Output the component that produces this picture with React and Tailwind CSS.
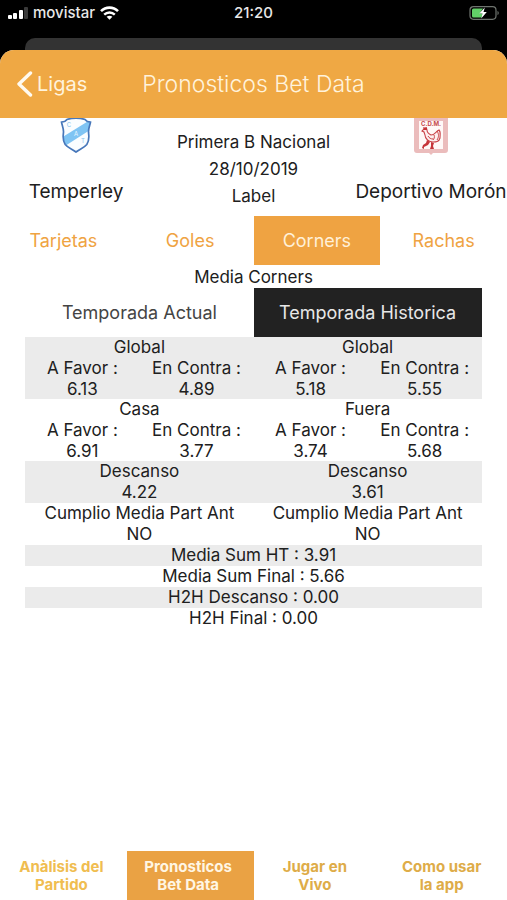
import React from "react";

const teamStats = [
  {
    shaded: true,
    titles: ["Global", "Global"],
    values: ["6.13", "4.89", "5.18", "5.55"],
  },
  {
    shaded: false,
    titles: ["Casa", "Fuera"],
    values: ["6.91", "3.77", "3.74", "5.68"],
  },
];

const pairStats = [
  { shaded: true, title: "Descanso", values: ["4.22", "3.61"] },
  { shaded: false, title: "Cumplio Media Part Ant", values: ["NO", "NO"] },
];

const totals = [
  "Media Sum HT : 3.91",
  "Media Sum Final : 5.66",
  "H2H Descanso : 0.00",
  "H2H Final : 0.00",
];

const tabs = ["Tarjetas", "Goles", "Corners", "Rachas"];

const sections = [
  { lines: ["Anàlisis del", "Partido"], tone: "text-[#f0bd50]" },
  { lines: ["Pronosticos", "Bet Data"], tone: "bg-[#eaa244] text-[#fff6e4]", active: true },
  { lines: ["Jugar en", "Vivo"], tone: "text-[#deac48]" },
  { lines: ["Como usar", "la app"], tone: "text-[#deac48]" },
];

function StatusBar() {
  return (
    <div className="grid h-[38px] grid-cols-3 items-start px-2 pt-1 text-[15px] leading-[18px] font-medium text-[#e8e8e8]">
      <div className="flex items-center gap-[5px]">
        <svg width="20" height="12" viewBox="0 0 20 12" aria-hidden="true">
          <rect x="0" y="8" width="4" height="4" rx="1" fill="#fff" />
          <rect x="5" y="6" width="4" height="6" rx="1" fill="#fff" />
          <rect x="11" y="3" width="4" height="9" rx="1" fill="#fff" />
          <rect x="16" y="0" width="4" height="12" rx="1" fill="#3a3a3a" />
        </svg>
        <span>movistar</span>
        <svg width="19" height="14" viewBox="0 0 19 14" aria-hidden="true">
          <path d="M1 5.2C5.8.4 13.200.4 18 5.200" fill="none" stroke="#fff" strokeWidth="2.600" />
          <path d="M4.200 8.600c3-2.900 7.600-2.900 10.600 0" fill="none" stroke="#fff" strokeWidth="2.400" />
          <path d="M9.500 13.800 6.600 10.800c1.700-1.500 4.100-1.500 5.800 0z" fill="#fff" />
        </svg>
      </div>
      <div className="text-center">21:20</div>
      <div className="flex justify-end pt-[2px]">
        <svg width="30" height="14" viewBox="0 0 30 14" aria-hidden="true">
          <rect x="1" y="0.700" width="26" height="12.600" rx="3.500" fill="none" stroke="#6f746f" strokeWidth="1.200" />
          <path d="M4.500 2.500h9.500l-3.500 5h3l-1 4h-8a1.500 1.500 0 0 1-1.500-1.500v-6a1.500 1.500 0 0 1 1.500-1.500z" fill="#62cf68" />
          <path d="M15.800 1.500 10.200 7.600h3.300l-1.300 5 5.600-6.500h-3.300z" fill="#fff" />
          <path d="M28.500 5c1.600.6 1.600 3.400 0 4z" fill="#6f746f" />
        </svg>
      </div>
    </div>
  );
}

function TemperleyCrest() {
  return (
    <svg width="32" height="36" viewBox="0 0 32 36" role="img" aria-label="Temperley">
      <clipPath id="crest">
        <path d="M7 1.500c5-1.600 13-1.600 18 0 1.400 2 3.500 2.600 5.500 2.700-.5 3-2.200 6.300-2 10 .4 4.300 1.300 8-1.700 12.300C24 30 19.500 31 16 34 12.500 31 8 30 5.200 26.500c-3-4.300-2.100-8-1.700-12.300.2-3.700-1.500-7-2-10 2-.1 4.100-.7 5.500-2.700z" />
      </clipPath>
      <g clipPath="url(#crest)">
        <rect width="32" height="36" fill="#fafdff" />
        <path d="M1 20 30 2v10L5 28z" fill="#7fc4f3" />
      </g>
      <path d="M7 1.500c5-1.600 13-1.600 18 0 1.400 2 3.500 2.600 5.500 2.700-.5 3-2.200 6.300-2 10 .4 4.300 1.300 8-1.700 12.300C24 30 19.500 31 16 34 12.500 31 8 30 5.200 26.500c-3-4.300-2.100-8-1.700-12.300.2-3.700-1.500-7-2-10 2-.1 4.100-.7 5.500-2.700z" fill="none" stroke="#4777ba" strokeWidth="1.700" />
      <g fontFamily="Inter, sans-serif" fontSize="6" textAnchor="middle">
        <text x="9" y="9" fill="#86c4ee">C</text>
        <text x="16" y="18" fill="#e8f6ff">A</text>
        <text x="23" y="25" fill="#86c4ee">T</text>
      </g>
    </svg>
  );
}

function MoronCrest() {
  return (
    <svg width="34" height="37" viewBox="0 0 34 37" role="img" aria-label="Deportivo Morón">
      <path d="M0 0h34v32q0 3-3 3H19l-2 2-2-2H3q-3 0-3-3z" fill="#ebbcbc" />
      <path d="M5 3h24v28H5z" fill="#fff8f7" />
      <text x="17" y="8" textAnchor="middle" fontFamily="Inter, sans-serif" fontSize="6" fontWeight="700" fill="#c4474a">C.D.M.</text>
      <path d="M10 11c1-2 3-1 3 1 0 3 2 4 4 5 4 0 5-4 8-5 2 2 1 5 1 8-1 4-4 4-7 4-4 0-8-3-8-7l-1-3-2-1z" fill="#fdeeee" stroke="#c94348" strokeWidth="1.100" />
      <path d="M23 13c2 3 2 6 0 9M20 17c1 2 0 4-1 5M14 18c1 2 3 3 5 3" fill="none" stroke="#c94348" strokeWidth="1" />
      <path d="M9 9l2 1 2-1v3h-3zM13 22l3 2-2 3-4 2v2l-2-1 1-3 3-2zM17 24l3 1-1 3 1 3h-4l1-3z" fill="#c63439" />
    </svg>
  );
}

function StatsTable() {
  return (
    <table className="w-full table-fixed text-center text-[17px] leading-[21px]">
      {teamStats.map((group, i) => (
        <tbody key={i} className={group.shaded ? "bg-[#ebebeb]" : "bg-white"}>
          <tr>
            {group.titles.map((title, j) => (
              <th key={j} colSpan={2} className="p-0 font-normal">{title}</th>
            ))}
          </tr>
          <tr>
            {["A Favor :", "En Contra :", "A Favor :", "En Contra :"].map((label, j) => (
              <th key={j} className="p-0 font-normal">{label}</th>
            ))}
          </tr>
          <tr className="leading-5">
            {group.values.map((value, j) => (
              <td key={j} className="p-0">{value}</td>
            ))}
          </tr>
        </tbody>
      ))}
      {pairStats.map((group) => (
        <tbody key={group.title} className={group.shaded ? "bg-[#ebebeb]" : "bg-white"}>
          <tr>
            <th colSpan={2} className="p-0 font-normal">{group.title}</th>
            <th colSpan={2} className="p-0 font-normal">{group.title}</th>
          </tr>
          <tr>
            <td colSpan={2} className="p-0">{group.values[0]}</td>
            <td colSpan={2} className="p-0">{group.values[1]}</td>
          </tr>
        </tbody>
      ))}
      <tbody>
        {totals.map((total) => (
          <tr key={total} className="odd:bg-[#ebebeb]">
            <td colSpan={4} className="p-0">{total}</td>
          </tr>
        ))}
      </tbody>
    </table>
  );
}

export default function App() {
  return (
    <div className="flex min-h-screen flex-col bg-black font-['Inter','Liberation_Sans',sans-serif] text-[#202020]">
      <StatusBar />
      <div className="mx-[5%] h-3 rounded-t-[10px] bg-[#333333]" />
      <div className="flex flex-1 flex-col overflow-hidden rounded-t-[14px] bg-white">
        <header className="grid h-[68px] grid-cols-[1fr_auto_1fr] items-center bg-[#efa844] px-4 text-[#fff3dc]">
          <button className="flex items-center gap-1 text-xl">
            <svg width="17" height="26" viewBox="0 0 17 26" aria-hidden="true">
              <path d="M14.500 2 3 13l11.500 11" fill="none" stroke="#fffaf0" strokeWidth="3.400" strokeLinecap="round" strokeLinejoin="round" />
            </svg>
            Ligas
          </button>
          <h1 className="text-[23px] font-light">Pronosticos Bet Data</h1>
        </header>

        <section className="grid h-[98px] grid-cols-[30%_1fr_30%] text-center">
          <div className="flex flex-col items-center justify-between pb-3">
            <TemperleyCrest />
            <h2 className="text-[19px] leading-6 whitespace-nowrap">Temperley</h2>
          </div>
          <div className="flex flex-col pt-[11px] text-[17px] leading-[27px]">
            <p>Primera B Nacional</p>
            <p>28/10/2019</p>
            <p>Label</p>
          </div>
          <div className="flex flex-col items-center justify-between pb-3">
            <MoronCrest />
            <h2 className="text-[19px] leading-6 whitespace-nowrap">Deportivo Morón</h2>
          </div>
        </section>

        <nav className="grid h-[49px] grid-cols-4 text-lg text-[#efa342]">
          {tabs.map((tab) => (
            <button key={tab} className={tab === "Corners" ? "bg-[#efa342] text-[#fff0d8]" : ""}>
              {tab}
            </button>
          ))}
        </nav>

        <main className="mx-[5%] flex-1">
          <h3 className="pt-[2px] text-center text-[17px] leading-[21px]">Media Corners</h3>
          <div className="grid h-[49px] grid-cols-2 text-lg">
            <button className="text-[#444444]">Temporada Actual</button>
            <button className="bg-[#222222] text-[#e8e8e8]">Temporada Historica</button>
          </div>
          <StatsTable />
        </main>

        <nav className="grid h-[49px] grid-cols-4 text-[15px] leading-[18px] font-bold">
          {sections.map((section) => (
            <button key={section.lines[0]} className={`pr-1 ${section.tone}`} aria-current={section.active ? "page" : undefined}>
              {section.lines.map((line) => (
                <span key={line} className="block">{line}</span>
              ))}
            </button>
          ))}
        </nav>
      </div>
    </div>
  );
}
